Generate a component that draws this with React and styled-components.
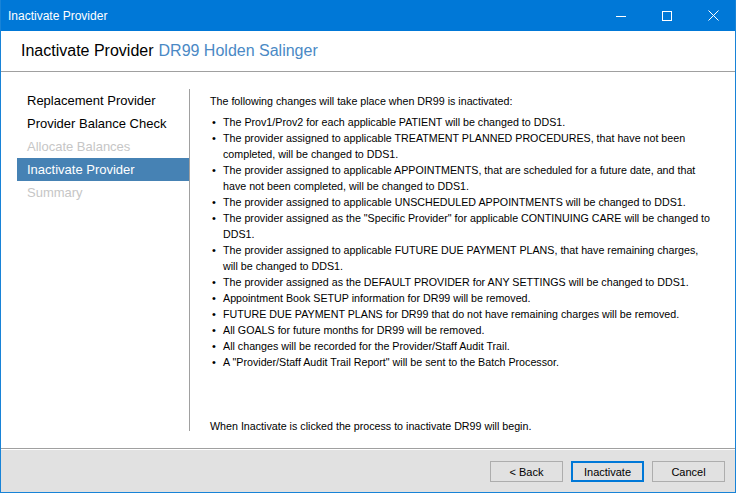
import React from 'react';
import styled, { createGlobalStyle } from 'styled-components';

const Global = createGlobalStyle`
    html, body {
        margin: 0;
        padding: 0;
        background: #ffffff;
    }
    * {
        box-sizing: border-box;
    }
`

const Window = styled.div`
    width: 736px;
    height: 493px;
    display: flex;
    flex-direction: column;
    border: 1px solid #1883d7;
    border-top: none;
    background: #ffffff;
    font-family: "Liberation Sans", Arial, sans-serif;
    overflow: hidden;
`

const TitleBar = styled.div`
    height: 31px;
    margin: 0 -1px;
    background: #0078d7;
    display: flex;
    align-items: center;
    color: #ffffff;
    font-size: 12px;
    padding-left: 8px;
`

const TitleText = styled.div`
    flex: 1;
`

const Caption = styled.div`
    width: 46px;
    height: 31px;
    display: flex;
    align-items: center;
    justify-content: center;
`

const Header = styled.div`
    height: 41px;
    padding: 0 20px;
    display: flex;
    align-items: center;
    border-bottom: 1px solid #a0a0a0;
    font-size: 16px;
    color: #000000;
`

const HeaderName = styled.span`
    color: #4a89c5;
    margin-left: 5px;
`

const Body = styled.div`
    flex: 1;
    display: flex;
    padding: 17px 16px 17px 16px;
`

const Sidebar = styled.div`
    width: 173px;
    border-right: 1px solid #a0a0a0;
    display: flex;
    flex-direction: column;
`

const NavItem = styled.div`
    height: 23px;
    display: flex;
    align-items: center;
    padding-left: 10px;
    font-size: 13px;
    color: ${p => (p.$active ? '#ffffff' : p.$disabled ? '#c6c6c6' : '#000000')};
    background: ${p => (p.$active ? '#4682b4' : 'transparent')};
`

const Content = styled.div`
    flex: 1;
    padding: 4px 0 0 20px;
    display: flex;
    flex-direction: column;
    font-size: 10.7px;
    line-height: 16px;
    color: #000000;
    white-space: nowrap;
`

const List = styled.ul`
    list-style: none;
    margin: 5px 0 0 0;
    padding: 0;
`

const Item = styled.li`
    display: flex;
`

const Bullet = styled.span`
    width: 13px;
    padding-left: 2px;
    font-size: 11px;
`

const Note = styled.div`
    margin-top: auto;
    margin-bottom: -3px;
`

const Footer = styled.div`
    height: 44px;
    background: #e1e1e1;
    border-top: 1px solid #a0a0a0;
    box-shadow: inset 0 1px 0 #ffffff;
    display: flex;
    justify-content: flex-end;
    align-items: flex-start;
    gap: 8px;
    padding: 12px 10px 0 0;
`

const Button = styled.button`
    width: 73px;
    height: 21px;
    background: #e1e1e1;
    border: ${p => (p.$default ? '2px solid #0078d7' : '1px solid #adadad')};
    font-family: "Liberation Sans", Arial, sans-serif;
    font-size: 11px;
    color: #000000;
    padding: 0;
`

const bullets = [
    ['The Prov1/Prov2 for each applicable PATIENT will be changed to DDS1.'],
    ['The provider assigned to applicable TREATMENT PLANNED PROCEDURES, that have not been', 'completed, will be changed to DDS1.'],
    ['The provider assigned to applicable APPOINTMENTS, that are scheduled for a future date, and that', 'have not been completed, will be changed to DDS1.'],
    ['The provider assigned to applicable UNSCHEDULED APPOINTMENTS will be changed to DDS1.'],
    ['The provider assigned as the "Specific Provider" for applicable CONTINUING CARE will be changed to', 'DDS1.'],
    ['The provider assigned to applicable FUTURE DUE PAYMENT PLANS, that have remaining charges,', 'will be changed to DDS1.'],
    ['The provider assigned as the DEFAULT PROVIDER for ANY SETTINGS will be changed to DDS1.'],
    ['Appointment Book SETUP information for DR99 will be removed.'],
    ['FUTURE DUE PAYMENT PLANS for DR99 that do not have remaining charges will be removed.'],
    ['All GOALS for future months for DR99 will be removed.'],
    ['All changes will be recorded for the Provider/Staff Audit Trail.'],
    ['A "Provider/Staff Audit Trail Report" will be sent to the Batch Processor.'],
];

const steps = [
    { label: 'Replacement Provider' },
    { label: 'Provider Balance Check' },
    { label: 'Allocate Balances', disabled: true },
    { label: 'Inactivate Provider', active: true },
    { label: 'Summary', disabled: true },
];

const App = () => {
    return (
        <>
            <Global />
            <Window>
                <TitleBar>
                    <TitleText>Inactivate Provider</TitleText>
                    <Caption>
                        <svg width="10" height="10" viewBox="0 0 10 10">
                            <line x1="0" y1="5.5" x2="10" y2="5.5" stroke="#fff" strokeWidth="1" />
                        </svg>
                    </Caption>
                    <Caption>
                        <svg width="10" height="10" viewBox="0 0 10 10">
                            <rect x="0.5" y="0.5" width="9" height="9" fill="none" stroke="#fff" strokeWidth="1" />
                        </svg>
                    </Caption>
                    <Caption>
                        <svg width="11" height="11" viewBox="0 0 11 11">
                            <path d="M0.5 0.5 L10.5 10.5 M10.5 0.5 L0.5 10.5" stroke="#fff" strokeWidth="1" />
                        </svg>
                    </Caption>
                </TitleBar>
                <Header>
                    Inactivate Provider<HeaderName>DR99 Holden Salinger</HeaderName>
                </Header>
                <Body>
                    <Sidebar>
                        {steps.map(s => (
                            <NavItem key={s.label} $active={s.active} $disabled={s.disabled}>
                                {s.label}
                            </NavItem>
                        ))}
                    </Sidebar>
                    <Content>
                        <div>The following changes will take place when DR99 is inactivated:</div>
                        <List>
                            {bullets.map((lines, i) => (
                                <Item key={i}>
                                    <Bullet>•</Bullet>
                                    <span>
                                        {lines.map((l, j) => (
                                            <React.Fragment key={j}>
                                                {j > 0 && <br />}
                                                {l}
                                            </React.Fragment>
                                        ))}
                                    </span>
                                </Item>
                            ))}
                        </List>
                        <Note>When Inactivate is clicked the process to inactivate DR99 will begin.</Note>
                    </Content>
                </Body>
                <Footer>
                    <Button>&lt; Back</Button>
                    <Button $default>Inactivate</Button>
                    <Button>Cancel</Button>
                </Footer>
            </Window>
        </>
    );
};

export default App;
